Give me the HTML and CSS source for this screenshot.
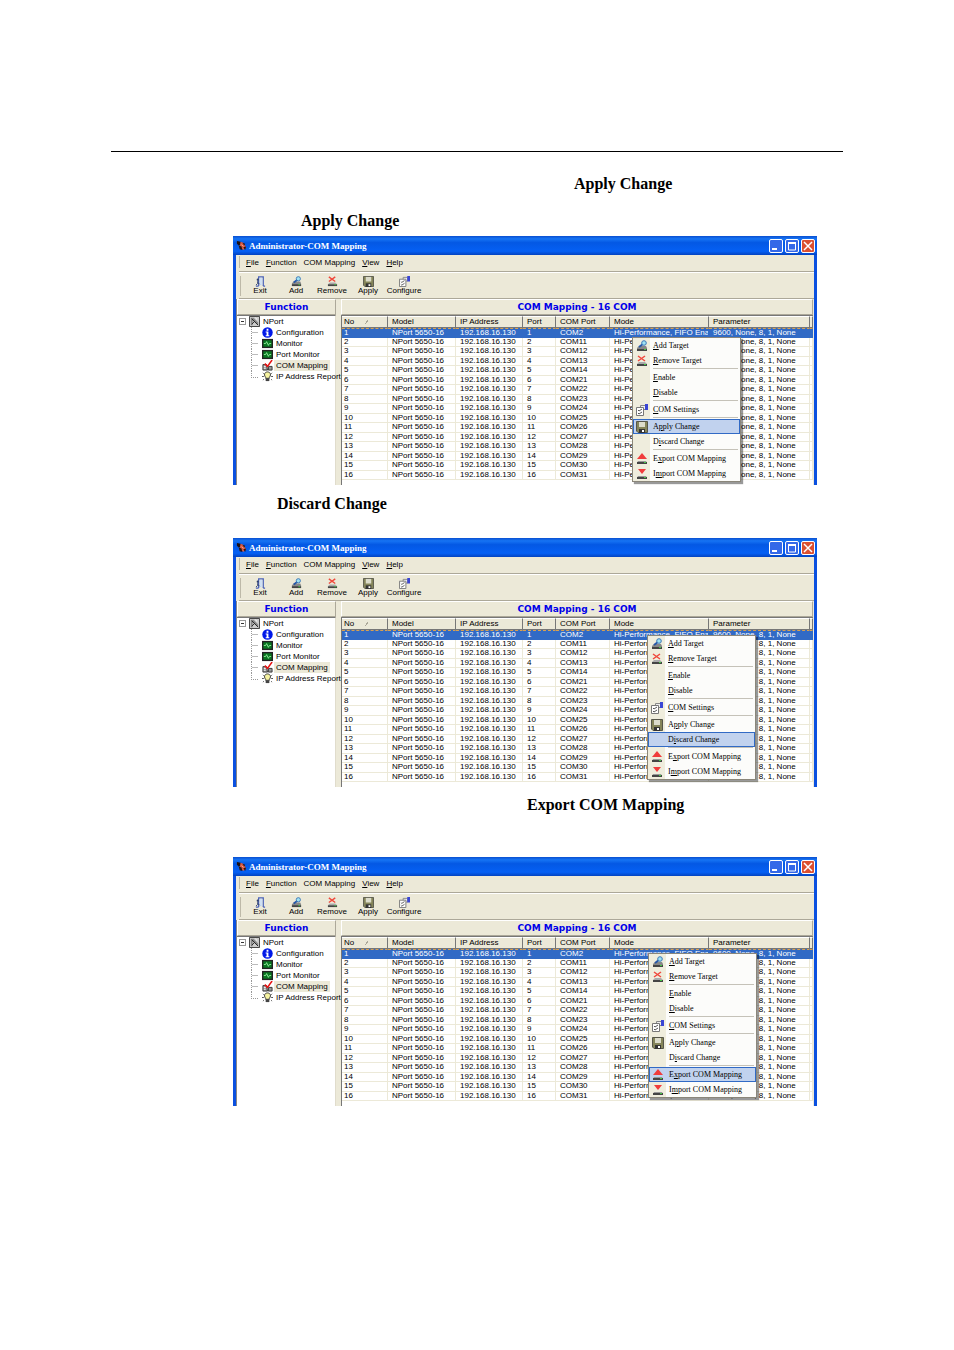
FILE: index.html
```html
<!DOCTYPE html>
<html lang="en">
<head>
<meta charset="utf-8">
<title>Administrator-COM Mapping</title>
<link rel="stylesheet" href="styles.css">
</head>
<body>
<svg class="sprite" aria-hidden="true">
  <symbol id="logo" viewBox="0 0 12 12"><path d="M1 1l4 1 1 3-3 1-2-2z" fill="#201010"/><path d="M5 2l3 1 3 5-3 3-4-4z" fill="#d85840"/><path d="M3 6l3 1 1 4-3-1zM7 3l3 1-1 2zM8 8l3-1-1 4z" fill="#2a1512"/><path d="M6 5l2 2" stroke="#f4b09c"/></symbol>
  <symbol id="exit" viewBox="0 0 12 12"><path d="M4 11V1h5v10M1 11h3M9 11h2" fill="none" stroke="#4a62b8" stroke-width="1.4"/><path d="M5 2h3v8H5z" fill="#cfe0f4"/><circle cx="3" cy="4" r="1.2" fill="#30406c"/><path d="M3 5v3l-2 2M3 7l2 2" stroke="#30406c" fill="none"/></symbol>
  <symbol id="add" viewBox="0 0 12 12"><path d="M1 8l2-2h7l1 2v3H1z" fill="#888"/><path d="M1 9h10v2H1z" fill="#444"/><path d="M8 9.500h2" stroke="#4c4"/><path d="M7 4L3 7" stroke="#2858a8" stroke-width="2"/><circle cx="8" cy="3" r="2.300" fill="#9fe3f3" stroke="#3a77b8"/></symbol>
  <symbol id="remove" viewBox="0 0 12 12"><path d="M1 9l2-2h6l2 2z" fill="#aaa"/><path d="M1 9h10v2H1z" fill="#444"/><path d="M8 9.500h2" stroke="#4c4"/><path d="M2 1l7 5M9 1L2 6" stroke="#f0483c" stroke-width="1.500"/></symbol>
  <symbol id="save" viewBox="0 0 12 12"><path d="M.5.5h11v11H2L.5 10z" fill="#85855a" stroke="#56564a"/><path d="M3 1h6v5H3z" fill="#dcdccb"/><path d="M3 8h6v4H3z" fill="#333"/><path d="M6 9h2v2H6z" fill="#fff"/></symbol>
  <symbol id="settings" viewBox="0 0 12 12"><path d="M4.500 1.500h5v4h-5z" fill="#eee" stroke="#888"/><path d="M.5 3.500h7v8h-7z" fill="#fff" stroke="#777"/><path d="M9 0h3v6H9z" fill="#3a46d4"/><path d="M2 6l1 1 3-2M2 9l1 1 3-2" stroke="#555" fill="none"/></symbol>
  <symbol id="export" viewBox="0 0 12 12"><path d="M6 0l5 6H1z" fill="#f03c3c"/><path d="M2 8h8l1 2H1z" fill="#999"/><path d="M1 9h10v2H1z" fill="#444"/><path d="M8 9.500h2" stroke="#4c4"/></symbol>
  <symbol id="import" viewBox="0 0 12 12"><path d="M2 1h8L6 6z" fill="#f03c3c"/><path d="M2 8h8l1 2H1z" fill="#999"/><path d="M1 9h10v2H1z" fill="#444"/><path d="M8 9.500h2" stroke="#4c4"/></symbol>
  <symbol id="nport" viewBox="0 0 12 12"><path d="M.5.5h11v11H.5z" fill="#ccc" stroke="#333"/><path d="M2 2h3l5 5v3L4 5v5H2z" fill="#888"/><path d="M3 3l7 7M3 9l3-3" stroke="#222"/><path d="M7 2l2 2" stroke="#fff"/></symbol>
  <symbol id="info" viewBox="0 0 12 12"><circle cx="6" cy="6" r="5.700" fill="#0018e8"/><path d="M5 2h2v2H5zM4 5h3v4h1v1H4V9h1V6H4z" fill="#fff"/></symbol>
  <symbol id="monitor" viewBox="0 0 12 12"><path d="M0 1h12v10H0z" fill="#222"/><path d="M1.500 2.500h9v7h-9z" fill="#087820"/><path d="M2 6h2l1-2 2 4 1-2h2" stroke="#8fe89a" fill="none"/></symbol>
  <symbol id="mapping" viewBox="0 0 12 12"><path d="M1 5h4l1 6H1zM7 7h4v4H7z" fill="#999" stroke="#333"/><path d="M2 7h2M2 9h2" stroke="#fff"/><path d="M3 4l3 3 5-7" stroke="#e81414" stroke-width="1.700" fill="none"/></symbol>
  <symbol id="bulb" viewBox="0 0 12 12"><path d="M1 2l1 1M11 2l-1 1M0 6h2M10 6h2M1 10l1-1M11 10l-1-1" stroke="#444"/><path d="M4 7C1 3 4 1 6 1s5 2 2 6v1H4z" fill="#f6f3a0" stroke="#333"/><path d="M4 8h4v3H4z" fill="#444"/></symbol>
</svg>
<main class="page">
  <hr class="rule">
  <p class="term term-right">Apply Change</p>
  <p class="term term-inner">Apply Change</p>
  <div class="window" data-menu="one" data-active="Apply Change"></div>
  <p class="term term-discard">Discard Change</p>
  <div class="window" data-menu="two" data-active="Discard Change"></div>
  <p class="term term-export">Export COM Mapping</p>
  <div class="window" data-menu="three" data-active="Export COM Mapping"></div>
</main>
<script src="app.js"></script>
</body>
</html>
```

FILE: styles.css
```css
* { box-sizing: border-box; }
body { margin: 0; background: #fff; color: #000; font-family: "Liberation Serif", serif; }
button { margin: 0; padding: 0; border: 0; background: none; color: inherit; font: inherit; }
.sprite { display: none; }
.icon { display: block; flex: none; width: 11px; height: 11px; }

.page { padding: 151px 111px 120px; }
.rule { height: 1px; margin: 0 0 22px; border: 0; background: #000; }
.term { margin: 0; font-size: 16px; line-height: 20px; font-weight: bold; }
.term-right { padding-left: 463px; }
.term-inner { margin: 17px 0 5px; padding-left: 190px; }
.term-discard { margin: 9px 0 24px; padding-left: 166px; }
.term-export { margin: 8px 0 42px; padding-left: 416px; }

.window { position: relative; margin: 0 26px 0 122px; background: #ece9d8; border: solid #0a50e0; border-width: 0 3px; font: 8px/9px "Liberation Sans", sans-serif; white-space: nowrap; }
.titlebar { display: flex; align-items: center; gap: 2px; height: 19px; margin: 0 -3px; padding: 0 2px 0 3px; color: #fff; background: linear-gradient(#0a4fd0, #1674f4 15%, #0458e4 35%, #0560f4 80%, #0343c0); }
.titlebar h2 { flex: 1; margin: 0; font: bold 9px/12px "Liberation Serif", serif; }
.winbtn { display: grid; place-items: center; width: 14px; height: 14px; border: 1px solid #fff; border-radius: 2px; background: #3468e8; }
.winbtn svg { width: 10px; height: 10px; fill: none; stroke: #fff; stroke-width: 2; }
.winbtn.close { background: #dc5030; }

.menubar { display: flex; align-items: center; gap: 7px; height: 17px; padding: 0 0 2px 4px; margin-left: 3px; border-bottom: 1px solid #aca899; }
.menubar::before, .toolbar::before { content: ""; width: 1px; height: 12px; margin: 0 -1px 0 -4px; background: #bdb9a8; }
.toolbar { display: flex; align-items: center; height: 27px; padding-left: 5px; margin-left: 3px; border-top: 1px solid #fff; border-bottom: 1px solid #aca899; }
.toolbar::before { height: 20px; margin: 0 1px 0 -4px; }
.toolbar button { display: flex; flex-direction: column; align-items: center; width: 36px; }
.toolbar .icon + span { margin-top: -1px; }

.panes { display: grid; grid-template-columns: 99px 1fr; column-gap: 5px; padding-right: 1px; border-left: 1px solid #888; }
.panes h3 { margin: 0; height: 16px; border: 1px solid; border-color: #fff #aca899 #aca899 #fff; color: #0000e8; text-align: center; font: bold 9px/15px "DejaVu Sans", sans-serif; }
.tree { margin: 0; padding: 0 0 0 2px; list-style: none; background: #fff; border-top: 1px solid #777; border-right: 1px solid #e0dccc; }
.tree li { display: flex; align-items: center; gap: 3px; height: 11px; }
.tree .child { margin-left: 12px; }
.tree .child::before { content: ""; flex: none; width: 6px; height: 11px; border-left: 1px dotted #999; background: linear-gradient(#bbb, #bbb) 0 5px / 6px 1px no-repeat; margin-right: 1px; }
.tree .last::before { height: 6px; align-self: flex-start; background: none; border-bottom: 1px dotted #999; }
.tree .selected { background: #ece9d8; padding: 1px 2px; margin: 0 0 0 -2px; }
.box { flex: none; width: 7px; height: 7px; border: 1px solid #999; display: grid; place-items: center; }
.box::before { content: ""; width: 3px; height: 1px; background: #333; }

.list { background: #fff; padding-bottom: 5px; border-left: 1px solid #777; border-top: 1px solid #777; overflow: hidden; }
.list table { width: 100%; height: 164px; table-layout: fixed; border-collapse: separate; border-spacing: 0; }
.list th, .list td { height: 9px; padding: 0 0 0 4px; text-align: left; font-weight: normal; overflow: hidden; border-right: 1px solid #ece9d8; line-height: 8px; }
.list th { height: 12px; background: #ece9d8; border-right: 1px solid #777; border-bottom: 1px solid #777; border-top: 1px solid #fff; line-height: 10px; }
.list td { border-bottom: 1px solid #ece9d8; }
.list .picked td { background: #316ac5; color: #fff; border-color: #316ac5; border-top: 1px dashed #d8a050; line-height: 7px; }
.list th:first-child, .list td:first-child { padding-left: 2px; }
.list th:last-child, .list td:last-child { padding: 0; }
.sort { display: inline-block; width: 5px; height: 4px; margin-left: 10px; background: linear-gradient(120deg, transparent 45%, #aca899 45% 60%, transparent 60%); }
.c-no { width: 46px; }
.c-model { width: 68px; }
.c-ip { width: 67px; }
.c-port { width: 33px; }
.c-com { width: 54px; }
.c-param { width: 101px; }
.c-tail { width: 3px; }

.context { position: absolute; width: 109px; border: 1px solid #8a867a; background: linear-gradient(90deg, #efeddd 17px, #fcfcfa 17px); box-shadow: 2px 2px 1px #0006; font: 8px/10px "Liberation Serif", serif; }
.context.one { left: 396px; top: 101px; }
.context.two { left: 411px; top: 97px; }
.context.three { left: 412px; top: 96px; }
.context button { display: flex; align-items: center; gap: 5px; width: 100%; height: 15px; padding-left: 3px; text-align: left; }
.context button:not(:has(svg)) { padding-left: 20px; }
.context .icon { width: 12px; height: 12px; }
.context .active { background: #c1d2ee; outline: 1px solid #316ac5; outline-offset: -1px; }
.context hr { height: 1px; margin: 0 2px 1px 20px; border: 0; background: #c5c2b8; }
```

FILE: app.js
```javascript
const icon = (name) => `<svg class="icon" aria-hidden="true"><use href="#${name}"/></svg>`;

const tools = [["exit", "Exit"], ["add", "Add"], ["remove", "Remove"], ["save", "Apply"], ["settings", "Configure"]];
const tree = [["info", "Configuration"], ["monitor", "Monitor"], ["monitor", "Port Monitor"], ["mapping", "COM Mapping"], ["bulb", "IP Address Report"]];
const ports = [2, 11, 12, 13, 14, 21, 22, 23, 24, 25, 26, 27, 28, 29, 30, 31];
const commands = [
  ["add", "<u>A</u>dd Target"], ["remove", "<u>R</u>emove Target"], null,
  ["", "<u>E</u>nable"], ["", "<u>D</u>isable"], null,
  ["settings", "<u>C</u>OM Settings"], null,
  ["save", "A<u>p</u>ply Change"], ["", "D<u>i</u>scard Change"], null,
  ["export", "E<u>x</u>port COM Mapping"], ["import", "I<u>m</u>port COM Mapping"]
];

const row = (com, i) => `<tr class="${i === 0 ? "picked" : ""}"><td>${i + 1}</td><td>NPort 5650-16</td><td>192.168.16.130</td><td>${i + 1}</td><td>COM${com}</td><td>Hi-Performance, FIFO Ena</td><td>9600, None, 8, 1, None</td><td></td></tr>`;

const treeItem = ([name, label], i) =>
  `<li class="child ${i === tree.length - 1 ? "last" : ""}">${icon(name)}<span class="${name === "mapping" ? "selected" : ""}">${label}</span></li>`;

const command = (active) => (entry) => {
  if (!entry) return "<hr>";
  const [name, label] = entry;
  const on = label.replace(/<\/?u>/g, "") === active ? "active" : "";
  return `<button type="button" role="menuitem" class="${on}">${name ? icon(name) : ""}<span>${label}</span></button>`;
};

document.querySelectorAll(".window").forEach((win) => {
  win.innerHTML = `
    <header class="titlebar">${icon("logo")}<h2>Administrator-COM Mapping</h2>
      <button type="button" class="winbtn" aria-label="Minimize"><svg viewBox="0 0 10 10"><path d="M1 8h5"/></svg></button>
      <button type="button" class="winbtn" aria-label="Maximize"><svg viewBox="0 0 10 10"><path d="M1 1.500h8M1.500 1v8h7V1" stroke-width="1"/><path d="M1 2h8"/></svg></button>
      <button type="button" class="winbtn close" aria-label="Close"><svg viewBox="0 0 10 10"><path d="M1 1l8 8M9 1L1 9" stroke-width="1.500"/></svg></button>
    </header>
    <nav class="menubar">
      <button type="button"><u>F</u>ile</button><button type="button"><u>F</u>unction</button><button type="button">COM Mapping</button><button type="button"><u>V</u>iew</button><button type="button"><u>H</u>elp</button>
    </nav>
    <div class="toolbar">${tools.map(([n, t]) => `<button type="button">${icon(n)}<span>${t}</span></button>`).join("")}</div>
    <div class="panes">
      <h3>Function</h3><h3>COM Mapping - 16 COM</h3>
      <ul class="tree"><li><span class="box"></span>${icon("nport")}<span>NPort</span></li>${tree.map(treeItem).join("")}</ul>
      <div class="list"><table>
        <colgroup><col class="c-no"><col class="c-model"><col class="c-ip"><col class="c-port"><col class="c-com"><col><col class="c-param"><col class="c-tail"></colgroup>
        <thead><tr><th>No<span class="sort"></span></th><th>Model</th><th>IP Address</th><th>Port</th><th>COM Port</th><th>Mode</th><th>Parameter</th><th></th></tr></thead>
        <tbody>${ports.map(row).join("")}</tbody>
      </table></div>
    </div>
    <div class="context ${win.dataset.menu}" role="menu">${commands.map(command(win.dataset.active)).join("")}</div>`;
});
```
